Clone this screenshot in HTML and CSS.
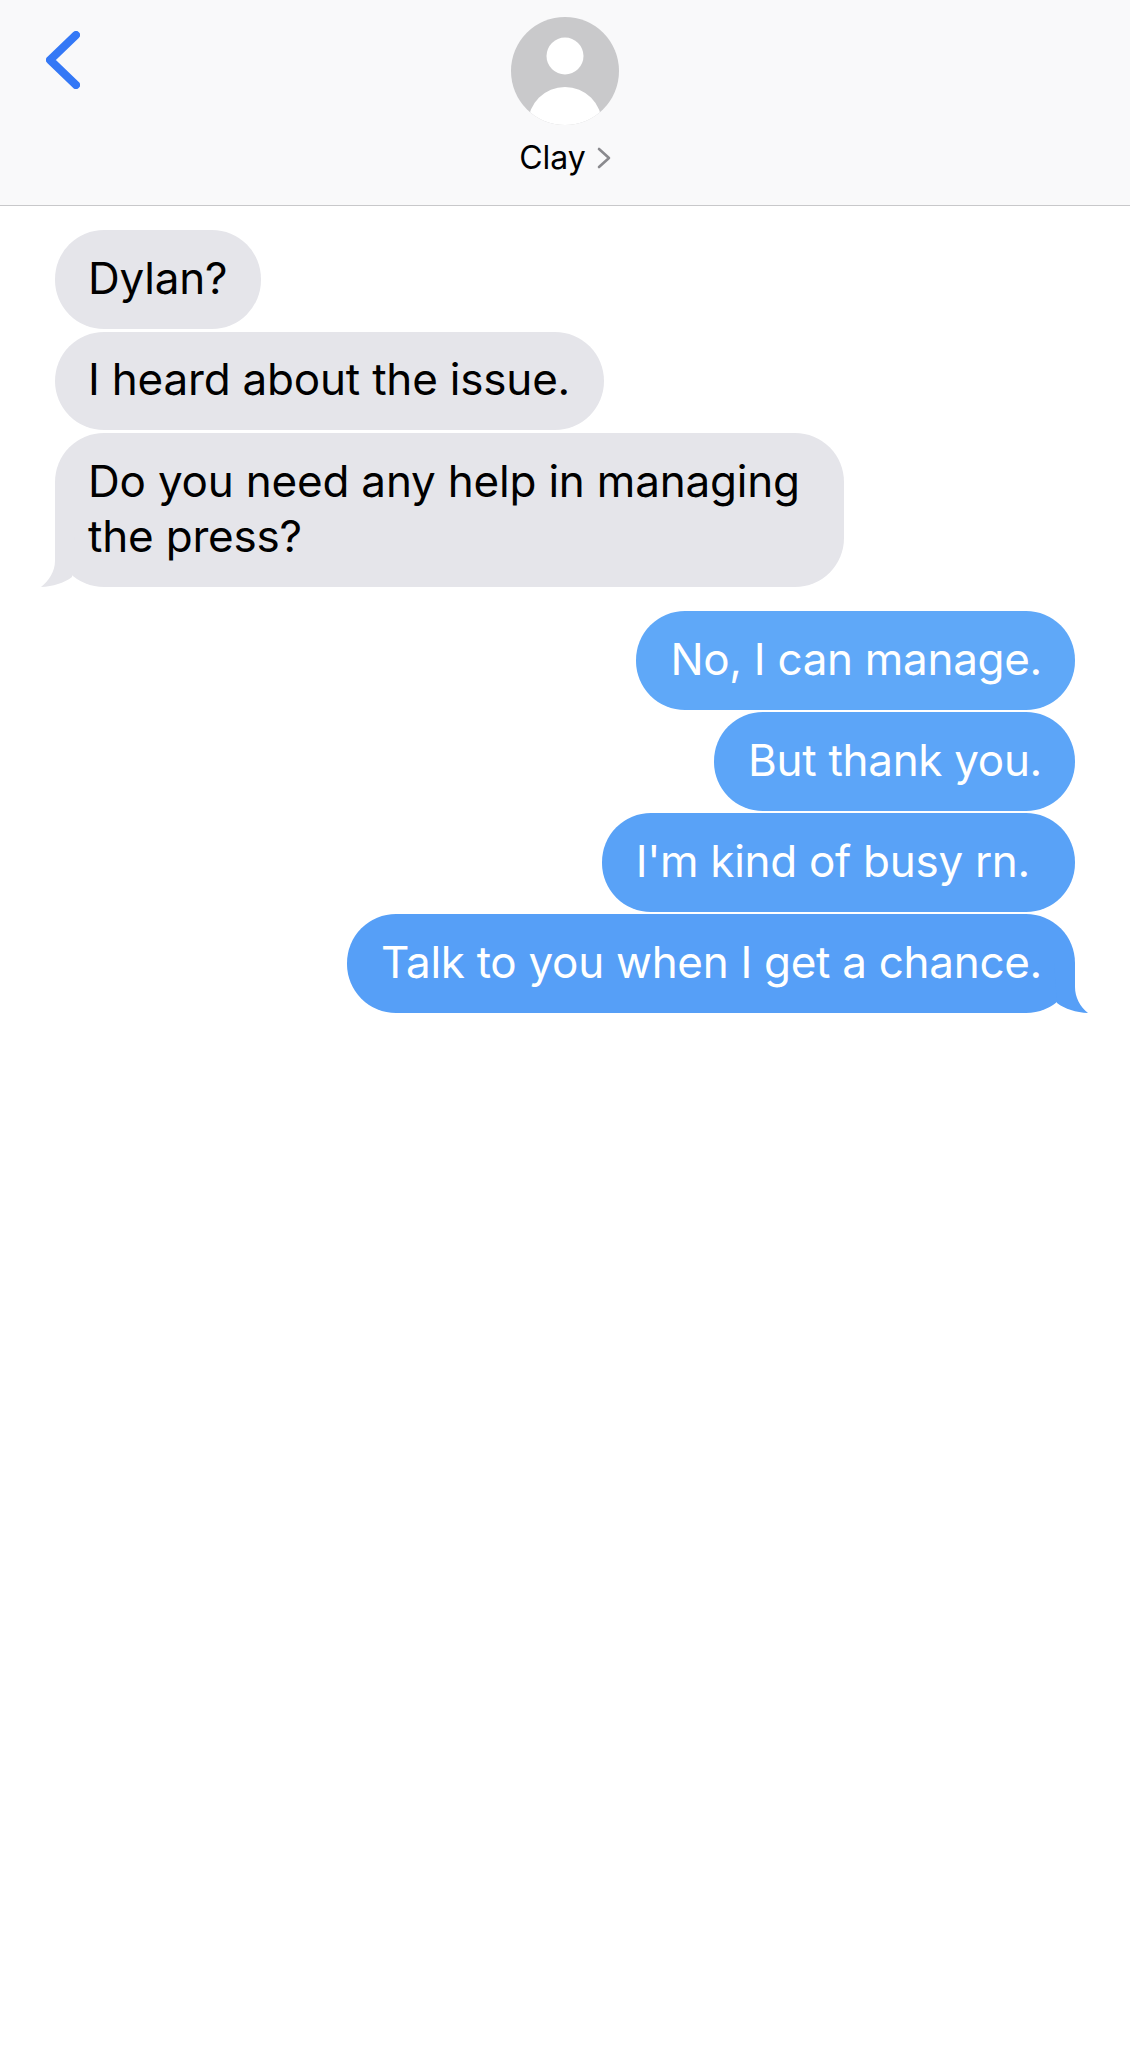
FILE: index.html
```html
<!DOCTYPE html>
<html lang="en">
  <head>
    <meta charset="UTF-8" />
    <meta name="viewport" content="width=device-width, initial-scale=1.0" />
    <title>Clay</title>
    <link rel="stylesheet" href="styles.css">
  </head>
  <body>
    <header class="top-bar">
      <div class="back">
        <svg width="34" height="58" viewBox="0 0 34 58">
          <path d="M30 4 L4 29 L30 54" fill="none" stroke="#3478f6" stroke-width="8" stroke-linecap="round" stroke-linejoin="round" />
        </svg>
      </div>
      <div class="contact">
        <svg class="avatar" width="108" height="108" viewBox="0 0 108 108">
          <defs>
            <clipPath id="avatar-clip"><circle cx="54" cy="54" r="54" /></clipPath>
          </defs>
          <circle cx="54" cy="54" r="54" fill="#c9c9cb" />
          <circle cx="54" cy="39" r="18.5" fill="#fff" />
          <circle cx="54" cy="107" r="37" fill="#fff" clip-path="url(#avatar-clip)" />
        </svg>
        <div class="contact-name">
          <span>Clay</span>
          <svg width="14" height="22" viewBox="0 0 14 22">
            <path d="M2 2 L12 11 L2 20" fill="none" stroke="#8a8a8e" stroke-width="2.6" stroke-linecap="round" stroke-linejoin="round" />
          </svg>
        </div>
      </div>
    </header>

    <main class="chat">
      <div class="group">
        <div class="bubble in">Dylan?</div>
        <div class="bubble in">I heard about the issue.</div>
        <div class="bubble in wide">
          Do you need any help in managing<br />the press?
          <svg class="tail" width="34" height="50" viewBox="0 0 34 50">
            <path d="M14 0 V24 C14 34 8 44 0 50 C12 49.5 23 46 31 40 L34 0 Z" />
          </svg>
        </div>
      </div>
      <div class="group outgoing">
        <div class="bubble out">No, I can manage.</div>
        <div class="bubble out">But thank you.</div>
        <div class="bubble out">I'm kind of busy rn.&nbsp;</div>
        <div class="bubble out">
          Talk to you when I get a chance.
          <svg class="tail" width="34" height="50" viewBox="0 0 34 50">
            <path d="M21 0 V24 C21 34 26 44 34 50 C22 49.5 11 46 3 40 L0 0 Z" />
          </svg>
        </div>
      </div>
    </main>
  </body>
</html>
```

FILE: styles.css
```css
body {
  margin: 0;
  padding: 0;
  font-family: "Inter", "Liberation Sans", sans-serif;
  background-color: #fff;
  color: #000;
}

.top-bar {
  display: grid;
  grid-template-columns: 1fr auto 1fr;
  height: 188px;
  padding: 17px 0 0 46px;
  background-color: #f9f9fa;
  border-bottom: 1px solid #c8c8ca;
}

.back {
  padding-top: 14px;
}

.contact {
  display: flex;
  flex-direction: column;
  align-items: center;
  margin-left: -46px;
}

.avatar {
  display: block;
}

.contact-name {
  display: flex;
  align-items: center;
  gap: 11px;
  margin-top: 13px;
  font-size: 32px;
  line-height: 40px;
}

.chat {
  display: flex;
  flex-direction: column;
  gap: 24.5px;
  padding: 24px 55px 0;
}

.group {
  display: flex;
  flex-direction: column;
  align-items: flex-start;
  gap: 3px;
}

.group.outgoing {
  align-items: flex-end;
  gap: 2.5px;
}

.bubble {
  position: relative;
  padding: 20.75px 34px 22.75px;
  border-radius: 49px;
  font-size: 44px;
  line-height: 55px;
  letter-spacing: -0.2px;
}

.bubble.in {
  padding-left: 33px;
  background-color: #e5e5ea;
}

.bubble.wide {
  box-sizing: border-box;
  width: 789px;
}

.bubble.out {
  padding-right: 33px;
  letter-spacing: -0.3px;
  background-color: #5fa8f8;
  color: #fff;
}

.bubble.out:nth-child(2) {
  background-color: #5ca5f8;
}

.bubble.out:nth-child(3) {
  background-color: #59a2f7;
}

.bubble.out:nth-child(4) {
  background-color: #569ff7;
}

.tail {
  position: absolute;
  bottom: 0;
}

.in .tail {
  left: -14px;
  fill: #e5e5ea;
}

.out .tail {
  right: -13px;
  fill: #569ff7;
}
```
